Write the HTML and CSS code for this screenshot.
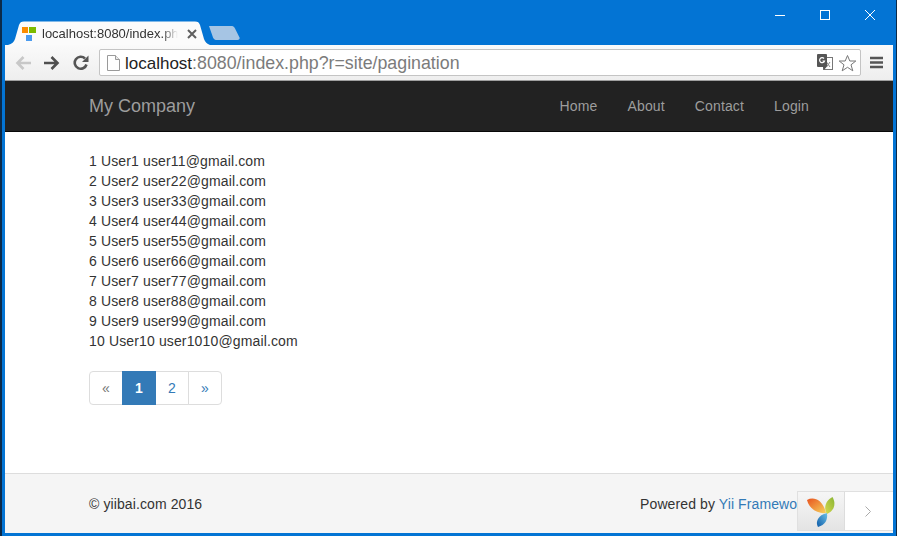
FILE: index.html
```html
<!DOCTYPE html>
<html lang="en">
<head>
<meta charset="utf-8">
<title>localhost:8080/index.php</title>
<link rel="stylesheet" href="styles.css">
</head>
<body>
<div class="window">
  <header class="titlebar">
    <div class="tabstrip">
      <div class="tab">
        <svg class="tab-shape" width="202" height="24" viewBox="0 0 202 24"><path d="M0 24C4 23 6 21 7 18L11 4C12 1.500 13 .5 16 .5H187C190 .5 191 1.500 192 4L196 18C197 21 199 23 202 24Z" fill="#fbfbfb"/></svg>
        <svg class="favicon" width="14" height="14" viewBox="0 0 14 14"><rect x="0" y="0" width="6" height="6" fill="#fb8c00"/><rect x="7" y="0" width="7" height="6" fill="#7cbb00"/><rect x="4" y="8" width="6" height="6" fill="#4a9bef"/></svg>
        <span class="tab-title">localhost:8080/index.ph</span>
        <svg class="tab-close" width="10" height="10" viewBox="0 0 10 10"><path d="M1 1L9 9M9 1L1 9" stroke="#5f5f5f" stroke-width="2"/></svg>
      </div>
      <svg class="newtab" width="31" height="14" viewBox="0 0 31 14"><path d="M0 0H22C24 0 25 .5 26 2.500L30.500 11.500C31 13 30 14 28.500 14H8C6 14 5 13.500 4 11.500Z" fill="#a6c5e4"/></svg>
    </div>
    <div class="winctl">
      <svg width="10" height="10" viewBox="0 0 10 10"><path d="M0 5.500H10" stroke="#fff"/></svg>
      <svg width="10" height="10" viewBox="0 0 10 10"><rect x=".5" y=".5" width="9" height="9" fill="none" stroke="#fff"/></svg>
      <svg width="10" height="10" viewBox="0 0 10 10"><path d="M0 0L10 10M10 0L0 10" stroke="#fff"/></svg>
    </div>
  </header>
  <div class="toolbar">
    <svg class="tool" width="16" height="14" viewBox="0 0 16 14"><path d="M16 7H3M8.500 1L2.500 7L8.500 13" fill="none" stroke="#c8c8c8" stroke-width="2.600"/></svg>
    <svg class="tool" width="16" height="14" viewBox="0 0 16 14"><path d="M0 7H13M7.500 1L13.500 7L7.500 13" fill="none" stroke="#4f4f4f" stroke-width="2.600"/></svg>
    <svg class="tool" width="16" height="16" viewBox="0 0 16 16"><path d="M13.500 9.500A6 6 0 1 1 12 3.500" fill="none" stroke="#555" stroke-width="2.600"/><path d="M9 7H15.500V.5Z" fill="#555"/></svg>
    <div class="omnibox">
      <svg class="page-icon" width="13" height="16" viewBox="0 0 13 16"><path d="M.5.5H8.500L12.500 4.500V15.500H.5Z" fill="#fff" stroke="#9a9a9a"/><path d="M8.500.5V4.500H12.500" fill="#e8e8e8" stroke="#9a9a9a"/></svg>
      <span class="url"><span class="host">localhost</span>:8080/index.php?r=site/pagination</span>
      <svg class="translate" width="16" height="17" viewBox="0 0 16 17"><rect x="6.500" y="3.500" width="9" height="12" fill="#fff" stroke="#777"/><path d="M9.500 8L13 13M13 8L9.500 13" stroke="#888"/><rect x="0" y="0" width="10" height="13" rx="1" fill="#555"/><path d="M7 16L9.500 13H6Z" fill="#555"/><path d="M7 4.500A2.500 2.500 0 1 0 7.500 7H5.500" fill="none" stroke="#fff" stroke-width="1.200"/></svg>
      <svg class="star" width="19" height="18" viewBox="0 0 19 18"><path d="M9.500 1.500L11.800 7H17.800L13 10.800L14.800 16.800L9.500 13.300L4.200 16.800L6 10.800L1.200 7H7.200Z" fill="#fff" stroke="#777"/></svg>
    </div>
    <svg class="menu" width="13" height="13" viewBox="0 0 13 13"><path d="M0 2H13M0 6.500H13M0 11H13" stroke="#555" stroke-width="2.600"/></svg>
  </div>
  <main class="page">
    <nav class="navbar">
      <a class="brand">My Company</a>
      <ul class="navlinks">
        <li>Home</li>
        <li>About</li>
        <li>Contact</li>
        <li>Login</li>
      </ul>
    </nav>
    <section class="content">
      <div class="users">
        <div>1 User1 user11@gmail.com</div>
        <div>2 User2 user22@gmail.com</div>
        <div>3 User3 user33@gmail.com</div>
        <div>4 User4 user44@gmail.com</div>
        <div>5 User5 user55@gmail.com</div>
        <div>6 User6 user66@gmail.com</div>
        <div>7 User7 user77@gmail.com</div>
        <div>8 User8 user88@gmail.com</div>
        <div>9 User9 user99@gmail.com</div>
        <div>10 User10 user1010@gmail.com</div>
      </div>
      <ul class="pagination">
        <li class="disabled">«</li>
        <li class="active">1</li>
        <li>2</li>
        <li>»</li>
      </ul>
    </section>
    <footer class="footer">
      <span>© yiibai.com 2016</span>
      <span class="powered">Powered by <a>Yii Framework</a></span>
    </footer>
    <div class="debugbar">
      <div class="yii-logo">
        <svg width="28" height="30" viewBox="0 0 28 30">
          <defs>
            <linearGradient id="o" x1="0" y1="0" x2="1" y2="1"><stop offset="0" stop-color="#e8531f"/><stop offset="1" stop-color="#f7d25c"/></linearGradient>
            <linearGradient id="g" x1="0" y1="1" x2="1" y2="0"><stop offset="0" stop-color="#d8d94f"/><stop offset="1" stop-color="#88b534"/></linearGradient>
            <linearGradient id="b" x1="0" y1="1" x2="1" y2="0"><stop offset="0" stop-color="#0d5aa7"/><stop offset="1" stop-color="#6cc1e8"/></linearGradient>
          </defs>
          <path d="M0 3C7 -1 16 3 19 16C11 17 2 12 0 3Z" fill="url(#o)"/>
          <path d="M25.500 0C29.500 7 27 14 20 17C16 11 19 3 25.500 0Z" fill="url(#g)"/>
          <path d="M11 30C8 25 11 18 20 16C21 23 18 28 11 30Z" fill="url(#b)"/>
        </svg>
      </div>
      <div class="debug-toggle">
        <svg width="6" height="11" viewBox="0 0 6 11"><path d="M.5.5L5.500 5.500L.5 10.500" fill="none" stroke="#aaa"/></svg>
      </div>
    </div>
  </main>
</div>
</body>
</html>
```

FILE: styles.css
```css
* { box-sizing: border-box; }
html, body { margin: 0; height: 100%; overflow: hidden; }
body { background: #0b2a4a; font-family: "Liberation Sans", Arial, sans-serif; font-size: 14px; color: #333; }
ul { list-style: none; margin: 0; padding: 0; }

.window {
  height: 536px;
  margin-left: 2px;
  margin-right: 1px;
  background: #0374d4;
  padding: 0 3px 3px;
  display: flex;
  flex-direction: column;
}

.titlebar { height: 45px; flex: none; display: flex; justify-content: space-between; }
.tabstrip { display: flex; align-items: flex-end; padding-left: 3px; }
.tab { position: relative; width: 202px; height: 24px; display: flex; align-items: center; padding: 1px 0 0 14px; }
.tab-shape { position: absolute; left: 0; top: 0; }
.favicon, .tab-title, .tab-close { position: relative; }
.favicon { flex: none; }
.tab-title {
  width: 136px; margin-left: 6px; font-size: 13px; color: #333;
  overflow: hidden; white-space: nowrap;
  -webkit-mask-image: linear-gradient(to right, #000 88%, transparent);
  mask-image: linear-gradient(to right, #000 88%, transparent);
}
.tab-close { margin-left: 9px; flex: none; }
.newtab { margin: 0 0 5px -1px; }

.winctl { display: flex; gap: 35px; padding: 10px 18px 0 0; align-items: flex-start; }

.toolbar {
  height: 36px; flex: none;
  display: flex; align-items: center;
  background: linear-gradient(#fafafa, #eeeeee);
  border-bottom: 1px solid #a0a0a0;
  padding: 0 10px;
}
.tool { flex: none; margin-right: 13px; }
.omnibox {
  flex: 1; height: 27px; margin: 0 9px 0 -3px;
  background: #fff; border: 1px solid #c4c4c4; border-radius: 2px;
  display: flex; align-items: center; padding: 0 3px 0 7px;
}
.page-icon { flex: none; margin-right: 5px; }
.url { flex: 1; padding-top: 2px; font-size: 17.8px; color: #7b7b7b; white-space: nowrap; }
.host { color: #222; font-size: 17px; }
.translate { margin-right: 5px; }
.menu { flex: none; }

.page {
  position: relative;
  flex: 1; min-height: 0;
  background: #fff;
  display: flex; flex-direction: column;
  overflow: hidden;
}

.navbar {
  height: 51px; flex: none;
  background: #222; border-bottom: 1px solid #080808;
  display: flex; align-items: center; justify-content: space-between;
  padding: 0 84px;
}
.brand { font-size: 18px; color: #9d9d9d; }
.navlinks { display: flex; gap: 30px; color: #9d9d9d; letter-spacing: .14px; }

.content { flex: 1; padding: 19px 84px 0; line-height: 20px; letter-spacing: .14px; }
.pagination { display: flex; margin-top: 20px; height: 34px; line-height: 32px; }
.pagination li { width: 34px; text-align: center; color: #337ab7; border: 1px solid #ddd; margin-left: -1px; background: #fff; }
.pagination li:first-child { margin-left: 0; border-radius: 4px 0 0 4px; }
.pagination li:last-child { border-radius: 0 4px 4px 0; }
.pagination .disabled { color: #777; }
.pagination .active { position: relative; z-index: 1; background: #337ab7; border-color: #337ab7; color: #fff; font-weight: bold; }

.footer {
  height: 60px; flex: none;
  background: #f5f5f5; border-top: 1px solid #ddd;
  display: flex; align-items: center; justify-content: space-between;
  padding: 0 84px; line-height: 20px; letter-spacing: .1px;
  white-space: nowrap;
}
.powered a { color: #337ab7; }

.debugbar {
  position: absolute; right: 0; bottom: 2px;
  width: 96px; height: 40px;
  display: flex;
  border: 1px solid #e0e0e0; border-width: 1px 0 1px 1px;
  background: #fff;
}
.yii-logo { width: 47px; display: flex; align-items: center; justify-content: center; padding-top: 1px; background: linear-gradient(#f6f6f6, #e4e4e4); border-right: 1px solid #ddd; }
.debug-toggle { flex: 1; display: flex; align-items: center; justify-content: center; padding-right: 3px; }
```
